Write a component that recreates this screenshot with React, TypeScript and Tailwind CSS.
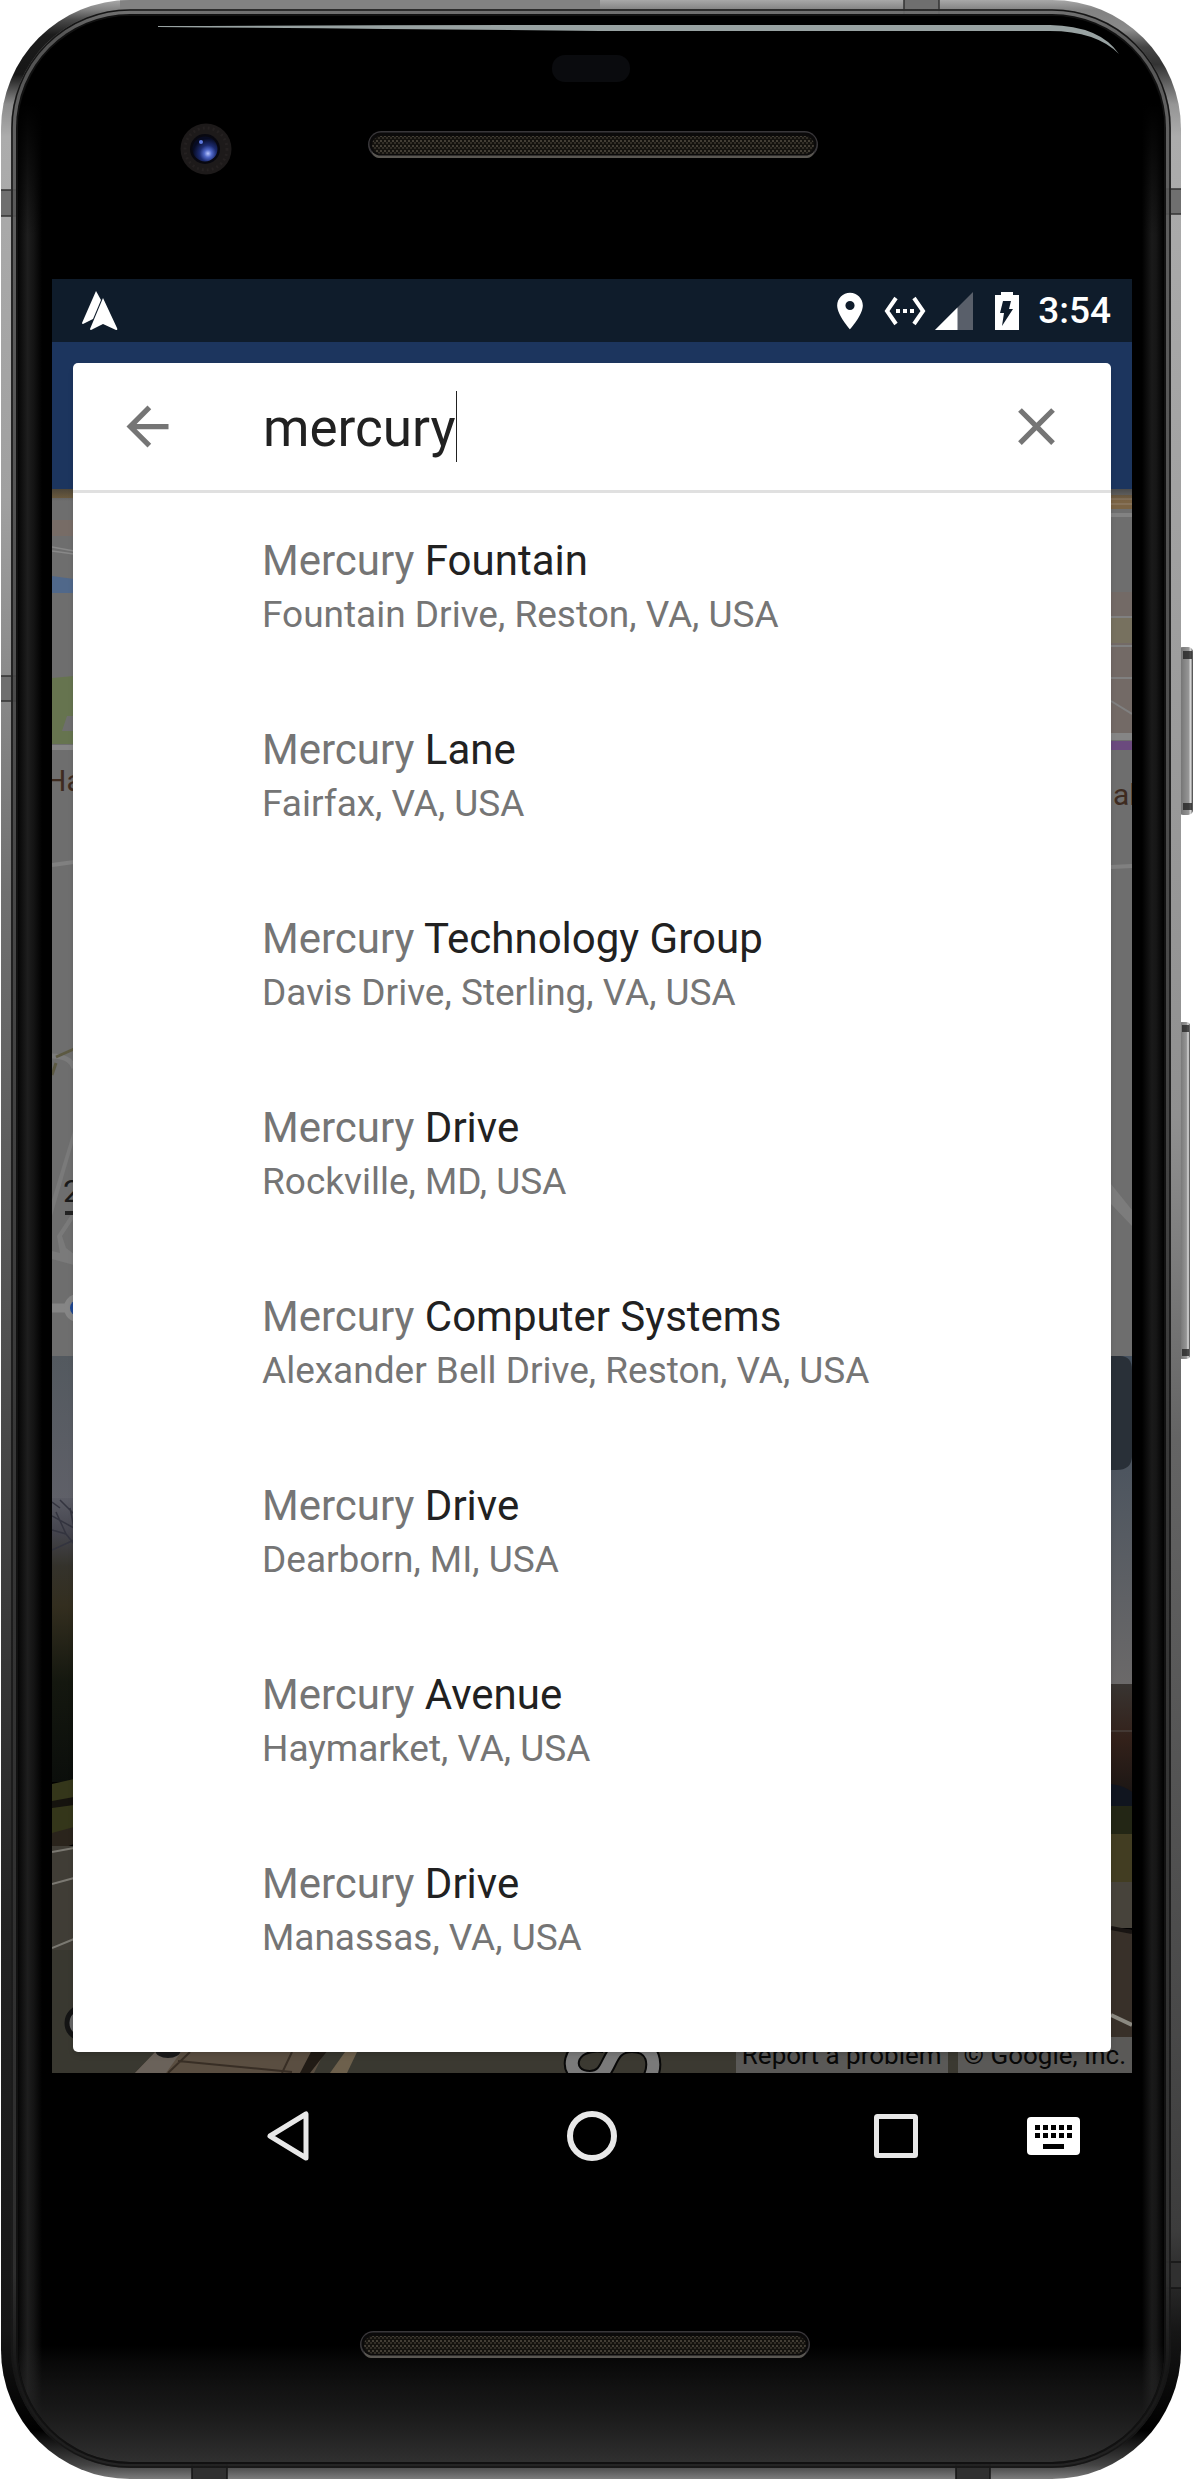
import React, { useState } from "react";

type Place = { match: string; rest: string; address: string };

const places: Place[] = [
  { match: "Mercury", rest: "Fountain", address: "Fountain Drive, Reston, VA, USA" },
  { match: "Mercury", rest: "Lane", address: "Fairfax, VA, USA" },
  { match: "Mercury", rest: "Technology Group", address: "Davis Drive, Sterling, VA, USA" },
  { match: "Mercury", rest: "Drive", address: "Rockville, MD, USA" },
  { match: "Mercury", rest: "Computer Systems", address: "Alexander Bell Drive, Reston, VA, USA" },
  { match: "Mercury", rest: "Drive", address: "Dearborn, MI, USA" },
  { match: "Mercury", rest: "Avenue", address: "Haymarket, VA, USA" },
  { match: "Mercury", rest: "Drive", address: "Manassas, VA, USA" },
];

function Speaker({ x, y }: { x: number; y: number }) {
  return (
    <g>
      <rect x={x} y={y} width="450" height="27" rx="13.5" fill="#39373a" />
      <rect x={x + 4} y={y + 14} width="442" height="13" rx="7" fill="#5a5752" />
      <rect x={x + 1.5} y={y + 1.5} width="447" height="23" rx="11.5" fill="#0b0a0a" />
      <rect x={x + 4} y={y + 5} width="442" height="18" rx="9" fill="url(#mesh)" />
    </g>
  );
}

function DeviceFrame() {
  return (
    <svg
      aria-hidden="true"
      className="absolute inset-0 h-full w-full"
      viewBox="0 0 1194 2480"
      preserveAspectRatio="none"
    >
      <defs>
        <linearGradient id="railL" gradientUnits="userSpaceOnUse" x1="0" y1="0" x2="0" y2="2480">
          <stop offset="0" stopColor="#a8a8a8" />
          <stop offset="0.004" stopColor="#828282" />
          <stop offset="0.008" stopColor="#4a4a4a" />
          <stop offset="0.014" stopColor="#1c1c1c" />
          <stop offset="0.03" stopColor="#161616" />
          <stop offset="0.042" stopColor="#8c8c8c" />
          <stop offset="0.055" stopColor="#acacac" />
          <stop offset="0.2" stopColor="#a0a0a0" />
          <stop offset="0.36" stopColor="#707070" />
          <stop offset="0.54" stopColor="#505050" />
          <stop offset="0.66" stopColor="#383838" />
          <stop offset="0.78" stopColor="#222" />
          <stop offset="0.94" stopColor="#161616" />
          <stop offset="0.98" stopColor="#000" />
          <stop offset="0.994" stopColor="#444" />
          <stop offset="1" stopColor="#808080" />
        </linearGradient>
        <linearGradient id="railR" gradientUnits="userSpaceOnUse" x1="0" y1="0" x2="0" y2="2480">
          <stop offset="0" stopColor="#a8a8a8" />
          <stop offset="0.004" stopColor="#828282" />
          <stop offset="0.012" stopColor="#8a8a8a" />
          <stop offset="0.019" stopColor="#444" />
          <stop offset="0.026" stopColor="#333" />
          <stop offset="0.042" stopColor="#959595" />
          <stop offset="0.055" stopColor="#acacac" />
          <stop offset="0.45" stopColor="#909090" />
          <stop offset="0.58" stopColor="#646464" />
          <stop offset="0.82" stopColor="#484848" />
          <stop offset="0.9" stopColor="#3c3c3c" />
          <stop offset="0.94" stopColor="#161616" />
          <stop offset="0.98" stopColor="#000" />
          <stop offset="0.994" stopColor="#444" />
          <stop offset="1" stopColor="#808080" />
        </linearGradient>
        <linearGradient id="innerRail" gradientUnits="userSpaceOnUse" x1="0" y1="9" x2="0" y2="2470">
          <stop offset="0" stopColor="#707070" />
          <stop offset="0.01" stopColor="#5c5c5c" />
          <stop offset="0.2" stopColor="#4c4c4c" />
          <stop offset="0.6" stopColor="#343434" />
          <stop offset="0.92" stopColor="#303030" />
          <stop offset="0.96" stopColor="#181818" />
          <stop offset="1" stopColor="#222" />
        </linearGradient>
        <linearGradient id="sheenL" x1="0" x2="1" y1="0" y2="0">
          <stop offset="0" stopColor="#050505" />
          <stop offset="0.4" stopColor="#1e1e1e" />
          <stop offset="0.65" stopColor="#141414" />
          <stop offset="1" stopColor="#000" />
        </linearGradient>
        <linearGradient id="sheenR" x1="1" x2="0" y1="0" y2="0">
          <stop offset="0" stopColor="#000" />
          <stop offset="0.35" stopColor="#161616" />
          <stop offset="0.55" stopColor="#1a1a1a" />
          <stop offset="1" stopColor="#000" />
        </linearGradient>
        <linearGradient id="chin" x1="0" x2="0" y1="0" y2="1">
          <stop offset="0" stopColor="#2e2e2e" stopOpacity="0" />
          <stop offset="0.5" stopColor="#222222" stopOpacity="0.65" />
          <stop offset="1" stopColor="#303030" />
        </linearGradient>
        <linearGradient id="fadeTop" x1="0" x2="0" y1="0" y2="1">
          <stop offset="0" stopColor="#000" />
          <stop offset="0.4" stopColor="#000" />
          <stop offset="1" stopColor="#000" stopOpacity="0" />
        </linearGradient>
        <linearGradient id="side" x1="0" x2="1" y1="0" y2="0">
          <stop offset="0" stopColor="#666" />
          <stop offset="0.35" stopColor="#808080" />
          <stop offset="0.7" stopColor="#959595" />
          <stop offset="0.85" stopColor="#dcdcdc" />
          <stop offset="1" stopColor="#333" />
        </linearGradient>
        <radialGradient id="lens" cx="0.62" cy="0.68" r="0.6">
          <stop offset="0" stopColor="#b9c6ff" />
          <stop offset="0.25" stopColor="#5068c8" />
          <stop offset="0.55" stopColor="#1c2b70" />
          <stop offset="1" stopColor="#070b22" />
        </radialGradient>
        <pattern id="mesh" width="4" height="5" patternUnits="userSpaceOnUse">
          <rect width="4" height="5" fill="#15130f" />
          <rect width="2" height="2" fill="#443f36" />
          <rect x="2" y="2" width="2" height="2" fill="#322e27" />
        </pattern>
        <clipPath id="body">
          <rect x="1" y="0" width="1180" height="2479" rx="129" />
        </clipPath>
        <clipPath id="glass">
          <rect x="18" y="16" width="1146" height="2446" rx="112" />
        </clipPath>
      </defs>

      <rect x="1178" y="647" width="15" height="168" rx="5" fill="url(#side)" />
      <path d="M1183 651h9v8h-9zM1183 803h9v7h-9z" fill="#1d1d1d" opacity="0.75" />
      <rect x="1178" y="1022" width="12" height="337" rx="4" fill="url(#side)" />
      <path d="M1182 1025h7v7h-7zM1182 1349h7v7h-7z" fill="#1d1d1d" opacity="0.75" />

      <g clipPath="url(#body)">
        <rect width="600" height="2480" fill="url(#railL)" />
        <rect x="600" width="594" height="2480" fill="url(#railR)" />
        <rect x="120" y="0" width="480" height="18" fill="#828282" />
        <g fill="#6f6f6f" stroke="#333" strokeWidth="1.5">
          <rect x="0" y="190" width="20" height="26" />
          <rect x="0" y="676" width="20" height="25" />
          <rect x="1162" y="189" width="22" height="25" />
          <rect x="904" y="-2" width="35" height="20" />
        </g>
        <g fill="#303030" stroke="#141414" strokeWidth="1.5">
          <rect x="1162" y="2262" width="22" height="26" />
          <rect x="192" y="2460" width="35" height="22" />
          <rect x="956" y="2460" width="34" height="22" />
        </g>
      </g>
      <rect x="11" y="9" width="1160" height="2459" rx="119" fill="url(#innerRail)" fillOpacity="0.9" />
      <rect x="12" y="10" width="1158" height="2457" rx="118" fill="none" stroke="#161616" strokeWidth="1.5" />
      <rect x="16" y="14" width="1150" height="2450" rx="114" fill="#111" />
      <g clipPath="url(#glass)">
        <rect x="18" y="16" width="1146" height="2446" fill="#000" />
        <rect x="18" y="16" width="24" height="2446" fill="url(#sheenL)" />
        <rect x="1142" y="16" width="22" height="2446" fill="url(#sheenR)" />
        <rect x="18" y="16" width="1146" height="220" fill="url(#fadeTop)" />
        <rect x="18" y="2345" width="1146" height="117" fill="url(#chin)" />
      </g>

      <path
        d="M158 26 Q400 25 700 25 H1050 Q1100 26 1119 54 Q1096 31 1050 31 H600 Q400 29 158 27Z"
        fill="#98a2a2"
      />
      <rect x="552" y="55" width="78" height="27" rx="13" fill="#0a0b0e" />
      <circle cx="206" cy="149" r="25.5" fill="#1d1a1a" />
      <circle cx="206" cy="149" r="21" fill="none" stroke="#252121" strokeWidth="3" strokeDasharray="2 3" />
      <circle cx="205" cy="149" r="15" fill="#080810" />
      <circle cx="205" cy="149" r="12.5" fill="url(#lens)" />
      <circle cx="201" cy="142" r="2" fill="#5d78dd" />
      <Speaker x={368} y={131} />
      <Speaker x={360} y={2331} />
    </svg>
  );
}

function MapBackdrop() {
  return (
    <svg
      aria-hidden="true"
      className="absolute inset-0 h-full w-full"
      viewBox="52 342 1080 1731"
      preserveAspectRatio="none"
    >
      <defs>
        <linearGradient id="skyL" x1="0" x2="0" y1="0" y2="1">
          <stop offset="0" stopColor="#53595f" />
          <stop offset="1" stopColor="#5f6068" />
        </linearGradient>
        <linearGradient id="skyR" x1="0" x2="0" y1="0" y2="1">
          <stop offset="0" stopColor="#465260" />
          <stop offset="0.35" stopColor="#4d555f" />
          <stop offset="1" stopColor="#6b6969" />
        </linearGradient>
        <linearGradient id="trees" x1="0" x2="0" y1="0" y2="1">
          <stop offset="0" stopColor="#5a5b64" />
          <stop offset="0.12" stopColor="#45454e" />
          <stop offset="0.24" stopColor="#34322b" />
          <stop offset="0.38" stopColor="#332e1f" />
          <stop offset="0.65" stopColor="#14170f" />
          <stop offset="1" stopColor="#0b0e0b" />
        </linearGradient>
        <linearGradient id="houses" x1="0" x2="0" y1="0" y2="1">
          <stop offset="0" stopColor="#383431" />
          <stop offset="0.5" stopColor="#33211a" />
          <stop offset="1" stopColor="#1b1614" />
        </linearGradient>
        <linearGradient id="barShadow" x1="0" x2="0" y1="0" y2="1">
          <stop offset="0" stopColor="#333" stopOpacity="0.6" />
          <stop offset="1" stopColor="#333" stopOpacity="0" />
        </linearGradient>
      </defs>

      <rect x="52" y="342" width="1080" height="147" fill="#1c355e" />
      <rect x="52" y="489" width="1080" height="867" fill="#6e6e6e" />

      <rect x="52" y="489" width="22" height="9" fill="#73603f" />
      <rect x="52" y="520" width="22" height="16" fill="#776c66" />
      <path d="M52 547l22 4M52 551l22 3" stroke="#888" strokeWidth="1.5" />
      <path d="M52 576l22 3v14H52z" fill="#50688a" />
      <path d="M52 678l22-2v68H52z" fill="#66744f" />
      <path d="M67 716h7v15H62z" fill="#6e6e6e" />
      <rect x="52" y="745" width="22" height="5" fill="#868686" />
      <path d="M52 865l22-3" stroke="#808080" strokeWidth="4" />
      <path d="M52 1056c10 0 19 3 22 12" fill="none" stroke="#7b7b7b" strokeWidth="5" />
      <path d="M56 1057l18-8M52 1075l4-12" stroke="#5c5942" strokeWidth="3" />
      <path d="M74 1128v12l-22 76v-16z" fill="#7a7a7a" />
      <path d="M57 1236l17-26v8l-12 18 4 12 8 6v11l-22-6v-8l8 2z" fill="#7a7a7a" />
      <path d="M52 1308h22" stroke="#858585" strokeWidth="9" />
      <circle cx="78" cy="1308" r="14" fill="#858585" />
      <circle cx="78" cy="1308" r="8" fill="#1f4790" />
      <g fontFamily="Roboto, sans-serif" fontSize="30" fill="#3e2b20">
        <text x="45" y="791">Ha</text>
        <text x="1113" y="805">al</text>
        <text x="63" y="1202" fontSize="32" fill="#1a1a1a">2</text>
      </g>
      <rect x="65" y="1211" width="9" height="4" fill="#222" />

      <rect x="1111" y="495" width="21" height="14" fill="#7a6344" />
      <path d="M1111 499h21M1111 504h21" stroke="#8a7860" strokeWidth="1.5" />
      <path d="M1111 515h21" stroke="#828282" strokeWidth="4" />
      <rect x="1111" y="592" width="21" height="141" fill="#736a66" />
      <rect x="1111" y="618" width="21" height="25" fill="#77715f" />
      <path d="M1111 617h21M1111 646h21M1111 678h21M1111 701l21 13" stroke="#808080" strokeWidth="2" />
      <rect x="1111" y="733" width="21" height="7" fill="#858585" />
      <rect x="1111" y="741" width="21" height="9" fill="#6b4a7e" />
      <path d="M1111 867l21-1" stroke="#808080" strokeWidth="4" />
      <path d="M1111 1184l21 26v16l-21-22z" fill="#7c7c7c" />
      <rect x="52" y="489" width="1080" height="12" fill="url(#barShadow)" />

      <rect x="52" y="1356" width="500" height="145" fill="url(#skyL)" />
      <rect x="52" y="1498" width="500" height="284" fill="url(#trees)" />
      <path
        d="M52 1502l8 6M60 1500l14 14M52 1516l22 12M52 1530l14 4 8 10M56 1512l10 22M70 1508l4 20M52 1550l22-10"
        fill="none"
        stroke="#33343f"
        strokeWidth="1.5"
      />
      <path d="M52 1784l22-5v50l-22 6z" fill="#34361a" />
      <path d="M52 1801l22-4v8l-22 3z" fill="#15130e" />
      <path d="M52 1833l22-6v17l-22 8z" fill="#2a241c" />
      <rect x="52" y="1846" width="500" height="227" fill="#403d36" />
      <rect x="52" y="1950" width="700" height="123" fill="#393830" />
      <path d="M52 1852l22-4M52 1884l22-6M52 1948l22-9" stroke="#7b7972" strokeWidth="2" />
      <circle cx="83" cy="2023" r="16" fill="#666" stroke="#141414" strokeWidth="5" />

      <rect x="552" y="1356" width="580" height="328" fill="url(#skyR)" />
      <path d="M1090 1356h30q12 0 12 14v86q0 14-16 14h-26z" fill="#293038" />
      <rect x="552" y="1684" width="580" height="110" fill="url(#houses)" />
      <path d="M1111 1731h21" stroke="#4a403c" strokeWidth="1.5" fill="none" />
      <path d="M1111 1784q14 2 21 8v14h-21z" fill="#10151f" />
      <rect x="1090" y="1806" width="42" height="30" fill="#232615" />
      <rect x="1090" y="1834" width="42" height="50" fill="#423d22" />
      <rect x="1090" y="1882" width="42" height="46" fill="#47433b" />
      <path d="M1090 1925l42 5v145h-42z" fill="#383029" />
      <path d="M1111 1928l21 4" stroke="#181412" strokeWidth="4" />
      <path d="M1111 2015l21 10" stroke="#8b8981" strokeWidth="4" />

      <rect x="400" y="2045" width="732" height="28" fill="#3b3931" />
      <path d="M162 2045h166l-14 28H135z" fill="#5a4e41" />
      <path d="M135 2073l27-28h24l-20 28z" fill="#6a625a" />
      <path d="M178 2061l114 11M292 2052l-10 21M190 2052l-22 21" stroke="#382e25" strokeWidth="2" />
      <path d="M312 2050h16l-18 23h-10z" fill="#211b15" />
      <path d="M345 2052h12l-10 21h-17z" fill="#6d604c" />
      <ellipse cx="168" cy="2050" rx="13" ry="8" fill="#1b1b1b" />
      <g fill="none">
        <path
          d="M604 2045C566 2040 562 2078 590 2078C614 2078 604 2045 632 2045C654 2045 658 2064 648 2082"
          stroke="#080808"
          strokeWidth="16"
        />
        <path
          d="M604 2045C566 2040 562 2078 590 2078C614 2078 604 2045 632 2045C654 2045 658 2064 648 2082"
          stroke="#7a7a7a"
          strokeWidth="12"
        />
      </g>
    </svg>
  );
}

function StatusBar() {
  return (
    <header className="flex h-[63px] items-center bg-[#0f1c2b] pr-[21px] pl-[29px] text-white">
      <svg aria-label="Navigation running" role="img" className="h-[42px] w-[37px]" viewBox="0 1 37 42">
        <path d="M15 2 1 34q0 1 1 1L12 30 20 11Z" fill="#fff" />
        <path d="M22 9 9 40q0 1 1 1L22 35 35 41q2 0 1-2Z" fill="#fff" />
      </svg>
      <div className="ml-auto flex items-center">
        <svg aria-label="Location on" role="img" className="h-[44px] w-[44px]" viewBox="0 0 24 24">
          <path
            fill="#fff"
            d="M12 2C8.13 2 5 5.13 5 9c0 5.25 7 13 7 13s7-7.750 7-13c0-3.870-3.130-7-7-7zm0 9.500a2.500 2.500 0 010-5 2.500 2.500 0 010 5z"
          />
        </svg>
        <svg aria-label="Ethernet connected" role="img" className="ml-[11px] h-[44px] w-[44px]" viewBox="0 0 44 44">
          <path d="M13 9 4 22l9 13M31 9l9 13-9 13" fill="none" stroke="#fff" strokeWidth="4" />
          <path d="M13 20h4v4h-4zM20 20h4v4h-4zM27 20h4v4h-4z" fill="#fff" />
        </svg>
        <svg aria-label="Mobile signal" role="img" className="ml-[8px] h-[38px] w-[38px]" viewBox="0 0 38 38">
          <path d="M38 0v38H0z" fill="#595f6a" />
          <path d="M22.500 15.500V38H0z" fill="#fff" />
        </svg>
        <svg aria-label="Battery charging" role="img" className="ml-[22px] h-[38px] w-[24px]" viewBox="0 0 24 38">
          <path d="M6 0h12v3h6v35H0V3h6z" fill="#fff" />
          <path d="M8 9h8l-2 8h4L7 34l2-13H5z" fill="#0f1c2b" />
        </svg>
        <time className="ml-[19px] text-[37px] leading-[43px] font-medium">3:54</time>
      </div>
    </header>
  );
}

function SearchCard() {
  const [query, setQuery] = useState("mercury");
  return (
    <section className="relative rounded-[5px] bg-white shadow-md">
      <form
        role="search"
        className="flex items-center border-b-[3px] border-[#e0e0e0] pr-[43px] pl-[43px]"
        onSubmit={(e) => e.preventDefault()}
      >
        <button type="button" aria-label="Back" className="h-[63px] w-[63px] shrink-0">
          <svg className="h-full w-full" viewBox="0 0 24 24" fill="#757575">
            <path d="M20 11H7.830l5.590-5.590L12 4l-8 8 8 8 1.410-1.410L7.830 13H20v-2z" />
          </svg>
        </button>
        <div className="ml-[84px] flex h-[127px] min-w-0 flex-1 items-center">
          <input
            type="text"
            aria-label="Search for a place"
            value={query}
            onChange={(e) => setQuery(e.target.value)}
            className="field-sizing-content h-[71px] max-w-full min-w-0 bg-transparent pt-1 text-[53px] text-[#212121] caret-transparent outline-none"
          />
          <span className="h-[71px] w-px shrink-0 bg-[#212121]" />
        </div>
        <button
          type="button"
          aria-label="Clear"
          className="h-[63px] w-[63px] shrink-0"
          onClick={() => setQuery("")}
        >
          <svg className="h-full w-full" viewBox="0 0 24 24" fill="#757575">
            <path d="M19 6.410L17.590 5 12 10.590 6.410 5 5 6.410 10.590 12 5 17.590 6.410 19 12 13.410 17.590 19 19 17.590 13.410 12z" />
          </svg>
        </button>
      </form>
      <ul className="pb-[47px]">
        {places.map((p, i) => (
          <li key={i}>
            <button type="button" className="block w-full pt-[43px] pr-6 pb-[46px] pl-[189px] text-left">
              <span className="block text-[42px] leading-[49px] text-[#757575]">
                {p.match} <span className="text-[#212121]">{p.rest}</span>
              </span>
              <span className="mt-2 block text-[37px] leading-[43px] text-[#757575]">{p.address}</span>
            </button>
          </li>
        ))}
      </ul>
    </section>
  );
}

function Attribution() {
  return (
    <div className="absolute right-0 bottom-0 flex gap-[10px] text-[26px] leading-[36px] text-[#080808]">
      <a href="#report" className="bg-[#5a5957] px-[6px]">
        Report a problem
      </a>
      <span className="bg-[#5a5957] px-[6px]">© Google, Inc.</span>
    </div>
  );
}

function NavBar() {
  return (
    <nav className="flex h-[126px] items-center pr-[52px] pl-[210px]">
      <div className="flex gap-[252px]">
        <button type="button" aria-label="Back" className="h-[52px] w-[52px]">
          <svg className="h-full w-full" viewBox="-4 0 52 52">
            <path d="M40 4v44L4 26z" fill="none" stroke="#e8e8e8" strokeWidth="5" strokeLinejoin="round" />
          </svg>
        </button>
        <button type="button" aria-label="Home" className="h-[52px] w-[52px]">
          <svg className="h-full w-full" viewBox="0 0 52 52">
            <circle cx="26" cy="26" r="22" fill="none" stroke="#e8e8e8" strokeWidth="6" />
          </svg>
        </button>
        <button type="button" aria-label="Overview" className="h-[52px] w-[52px]">
          <svg className="h-full w-full" viewBox="0 0 52 52">
            <rect x="6.500" y="6.500" width="39" height="39" rx="1" fill="none" stroke="#e8e8e8" strokeWidth="5" />
          </svg>
        </button>
      </div>
      <button type="button" aria-label="Switch keyboard" className="ml-auto h-[38px] w-[53px]">
        <svg className="h-full w-full" viewBox="0 0 53 38">
          <rect width="53" height="38" rx="4" fill="#fff" />
          <path
            fill="#000"
            d="M8 8h5v5H8zM16 8h5v5h-5zM24 8h5v5h-5zM32 8h5v5h-5zM40 8h5v5h-5zM8 16h5v5H8zM16 16h5v5h-5zM24 16h5v5h-5zM32 16h5v5h-5zM40 16h5v5h-5zM16 27h21v5H16z"
          />
        </svg>
      </button>
    </nav>
  );
}

export default function App() {
  return (
    <div className="relative bg-white pt-[279px] pr-[62px] pb-[281px] pl-[52px] font-['Roboto',sans-serif]">
      <DeviceFrame />
      <div className="relative">
        <StatusBar />
        <main className="relative overflow-hidden p-[21px]">
          <MapBackdrop />
          <Attribution />
          <SearchCard />
        </main>
        <NavBar />
      </div>
    </div>
  );
}
